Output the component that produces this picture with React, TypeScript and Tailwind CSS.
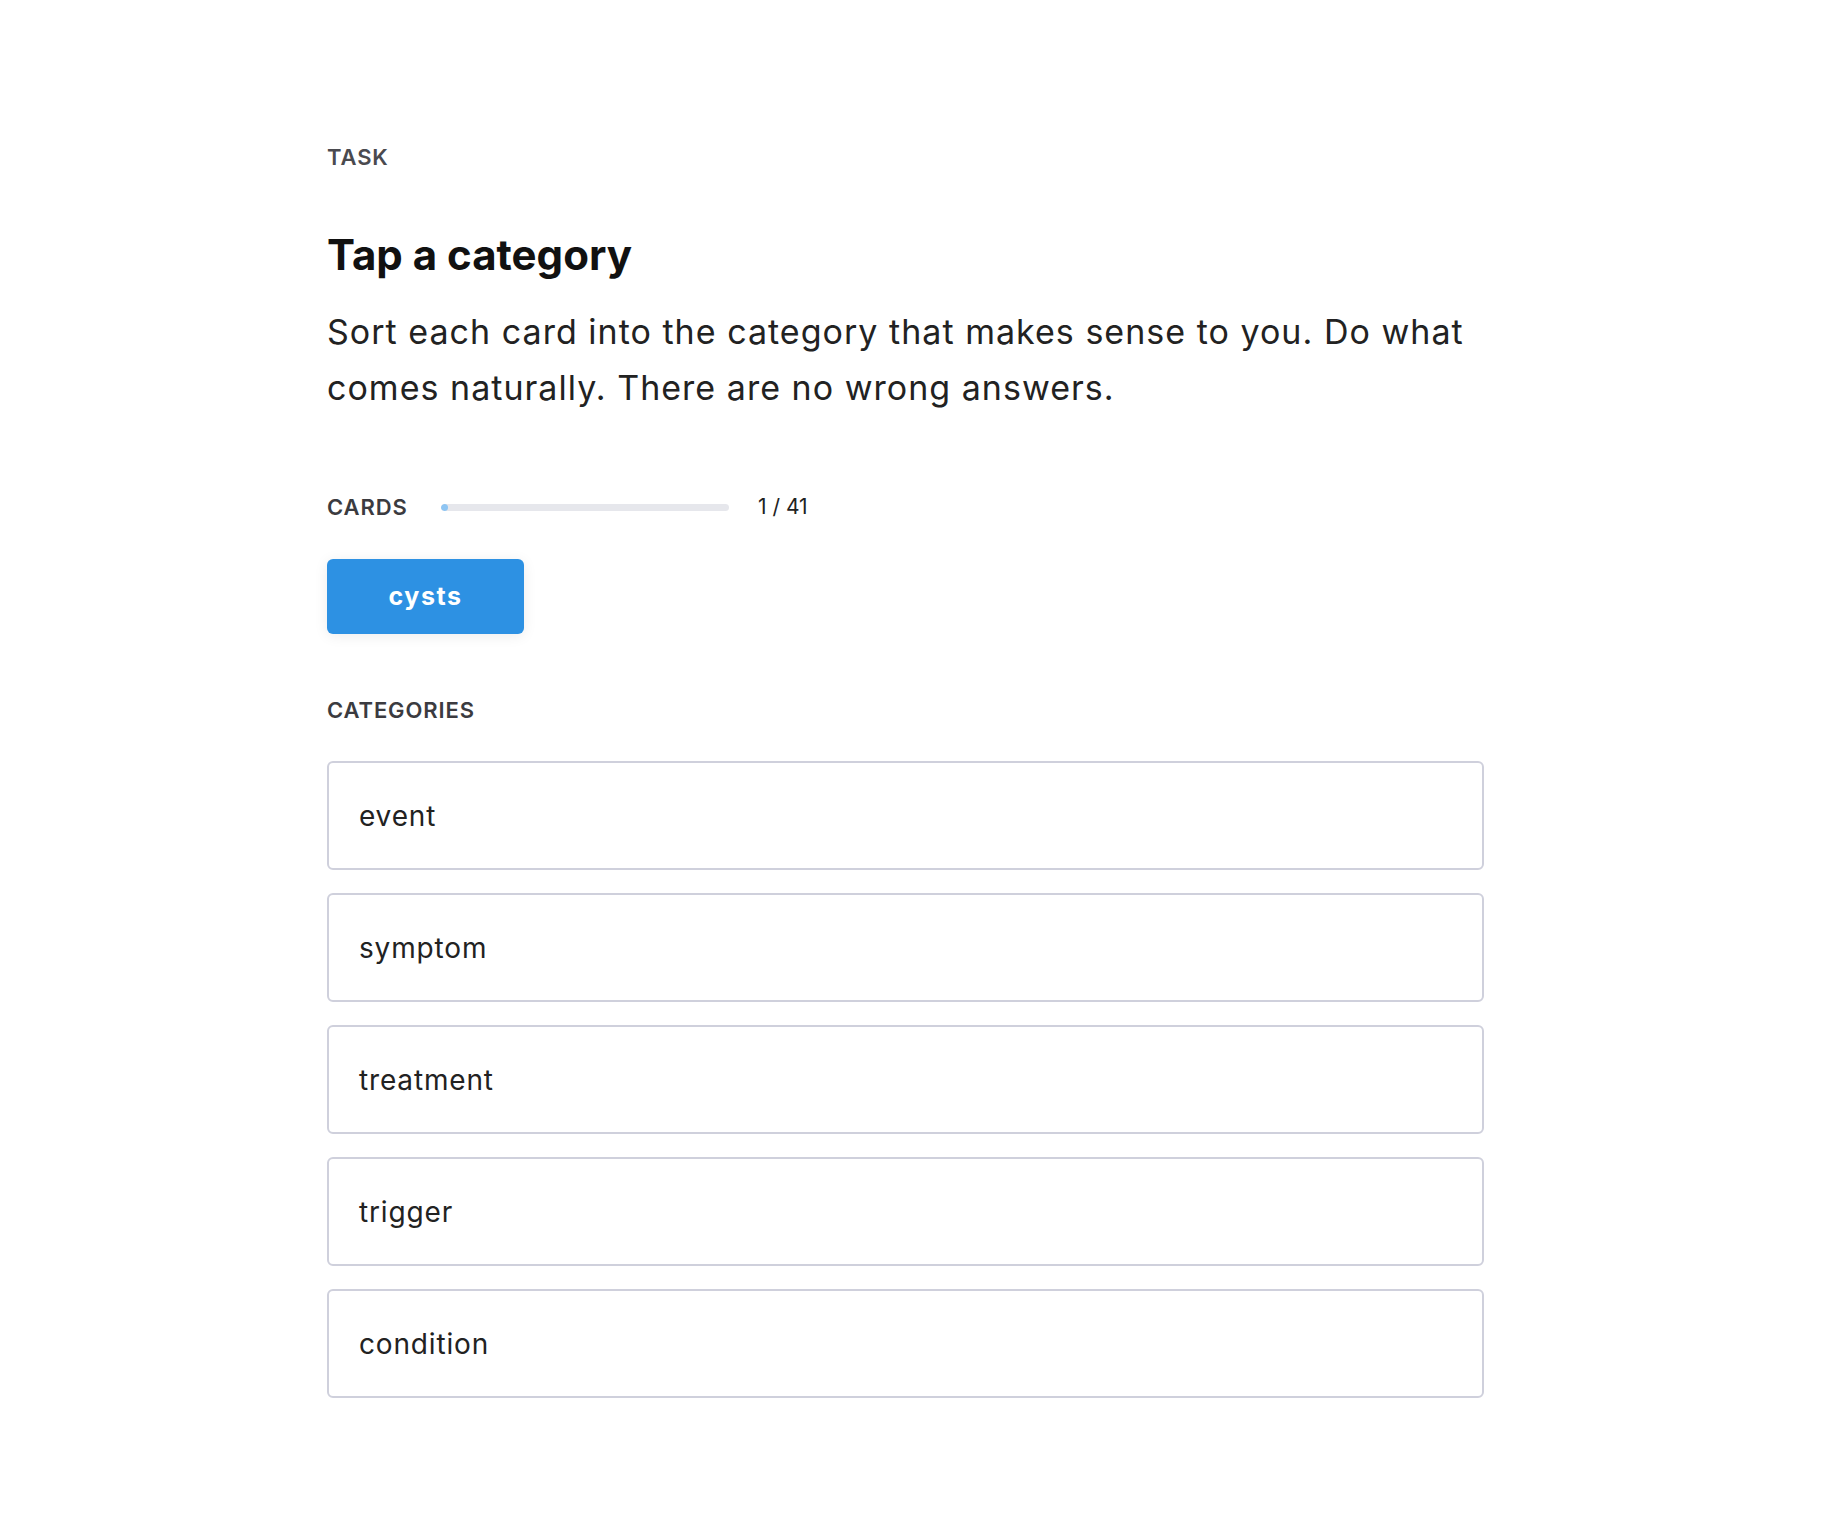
import React from "react";

/* Card-Sort-Aufgabe: eine Karte oben, darunter die Kategorien zum Antippen. */

const KATEGORIEN = ["event", "symptom", "treatment", "trigger", "condition"];

const FONT = "font-['Inter','Noto_Sans',sans-serif]";

export default function App() {
  const aktuell = 1;
  const gesamt = 41;
  const anteil = (aktuell / gesamt) * 100;

  return (
    <main className={`min-h-[1532px] bg-white ${FONT}`}>
      <div className="box-content w-[1157px] pl-[327px] pt-[143px]">
        <p className="text-[22px] leading-[28px] font-semibold uppercase tracking-[0.04em] text-[#4a4a4f]">Task</p>

        <h1 className="mt-[56px] text-[42px] leading-[56px] font-bold text-[#111]">Tap a category</h1>

        <p className="mt-[21px] text-[34px] leading-[56px] tracking-[0.03em] text-[#222]">
          Sort each card into the category that makes sense to you. Do what comes naturally. There are no wrong answers.
        </p>

        {/* Karten-Fortschritt */}
        <div className="mt-[77px] flex h-[28px] items-center">
          <span className="w-[114px] text-[22px] leading-[28px] font-semibold uppercase tracking-[0.04em] text-[#3b3b40]">Cards</span>
          <div className="h-[7px] w-[288px] overflow-hidden rounded-full bg-[#e6e7ec]">
            <div className="h-full rounded-full bg-[#8ec5f3]" style={{ width: `${Math.max(anteil, 2.5)}%` }} />
          </div>
          <span className="ml-[29px] text-[21px] leading-[28px] text-[#222]">
            {aktuell} / {gesamt}
          </span>
        </div>

        <button
          type="button"
          className="mt-[38px] flex h-[75px] w-[197px] items-center justify-center rounded-[6px] bg-[#2d91e3] text-[25px] font-bold tracking-[0.06em] text-white shadow-[0_2px_14px_rgba(0,0,0,0.08)]"
        >
          cysts
        </button>

        <p className="mt-[62px] text-[22px] leading-[28px] font-semibold uppercase tracking-[0.04em] text-[#3b3b40]">Categories</p>

        <div className="mt-[37px] flex flex-col gap-[23px]">
          {KATEGORIEN.map((k) => (
            <button
              key={k}
              type="button"
              className="flex h-[109px] items-center rounded-[6px] border-2 border-[#cfd0dc] bg-white px-[30px] text-left text-[28px] tracking-[0.03em] text-[#222]"
            >
              {k}
            </button>
          ))}
        </div>
      </div>
    </main>
  );
}
